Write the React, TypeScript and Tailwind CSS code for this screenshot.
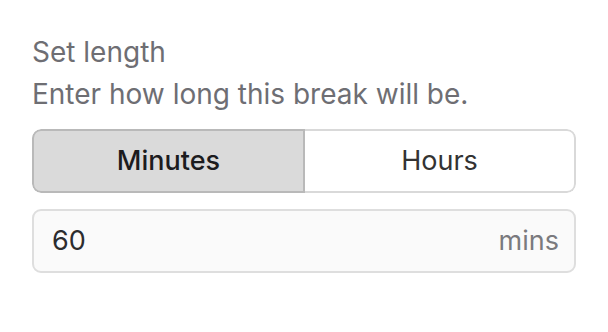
import { useState } from "react";

export default function App() {
  const [unit, setUnit] = useState<"min" | "hr">("min");
  const [value, setValue] = useState("60");
  return (
    <div className="min-h-[332px] w-[608px] bg-white px-8 pt-[35px] font-['Inter',sans-serif]">
      <p className="text-[28px] leading-[34px] text-[#6e6e73]">Set length</p>
      <p className="mt-[8px] text-[28px] leading-[34px] text-[#6e6e73]">Enter how long this break will be.</p>
      <div className="mt-[18px] flex h-[64px] overflow-hidden rounded-[9px]">
        <button
          onClick={() => setUnit("min")}
          className={
            unit === "min"
              ? "flex-1 rounded-l-[9px] border-2 border-[#b9b9b9] bg-[#dadada] text-[27px] font-medium text-[#1c1c1e]"
              : "flex-1 rounded-l-[9px] border-2 border-r-0 border-[#d9d9d9] bg-white text-[27px] text-[#333333]"
          }
        >
          Minutes
        </button>
        <button
          onClick={() => setUnit("hr")}
          className={
            unit === "hr"
              ? "flex-1 rounded-r-[9px] border-2 border-[#b9b9b9] bg-[#dadada] text-[27px] font-medium text-[#1c1c1e]"
              : "flex-1 rounded-r-[9px] border-2 border-l-0 border-[#d9d9d9] bg-white text-[27px] text-[#333333]"
          }
        >
          Hours
        </button>
      </div>
      <label className="mt-[16px] flex h-[64px] items-center rounded-[9px] border-2 border-[#dedede] bg-[#fafafa] pl-[18px] pr-[15px]">
        <input
          value={value}
          onChange={(e) => setValue(e.target.value)}
          className="min-w-0 flex-1 bg-transparent text-[27px] text-[#2c2c2e] outline-none"
        />
        <span className="text-[27px] text-[#7a7a7e]">{unit === "min" ? "mins" : "hrs"}</span>
      </label>
    </div>
  );
}
